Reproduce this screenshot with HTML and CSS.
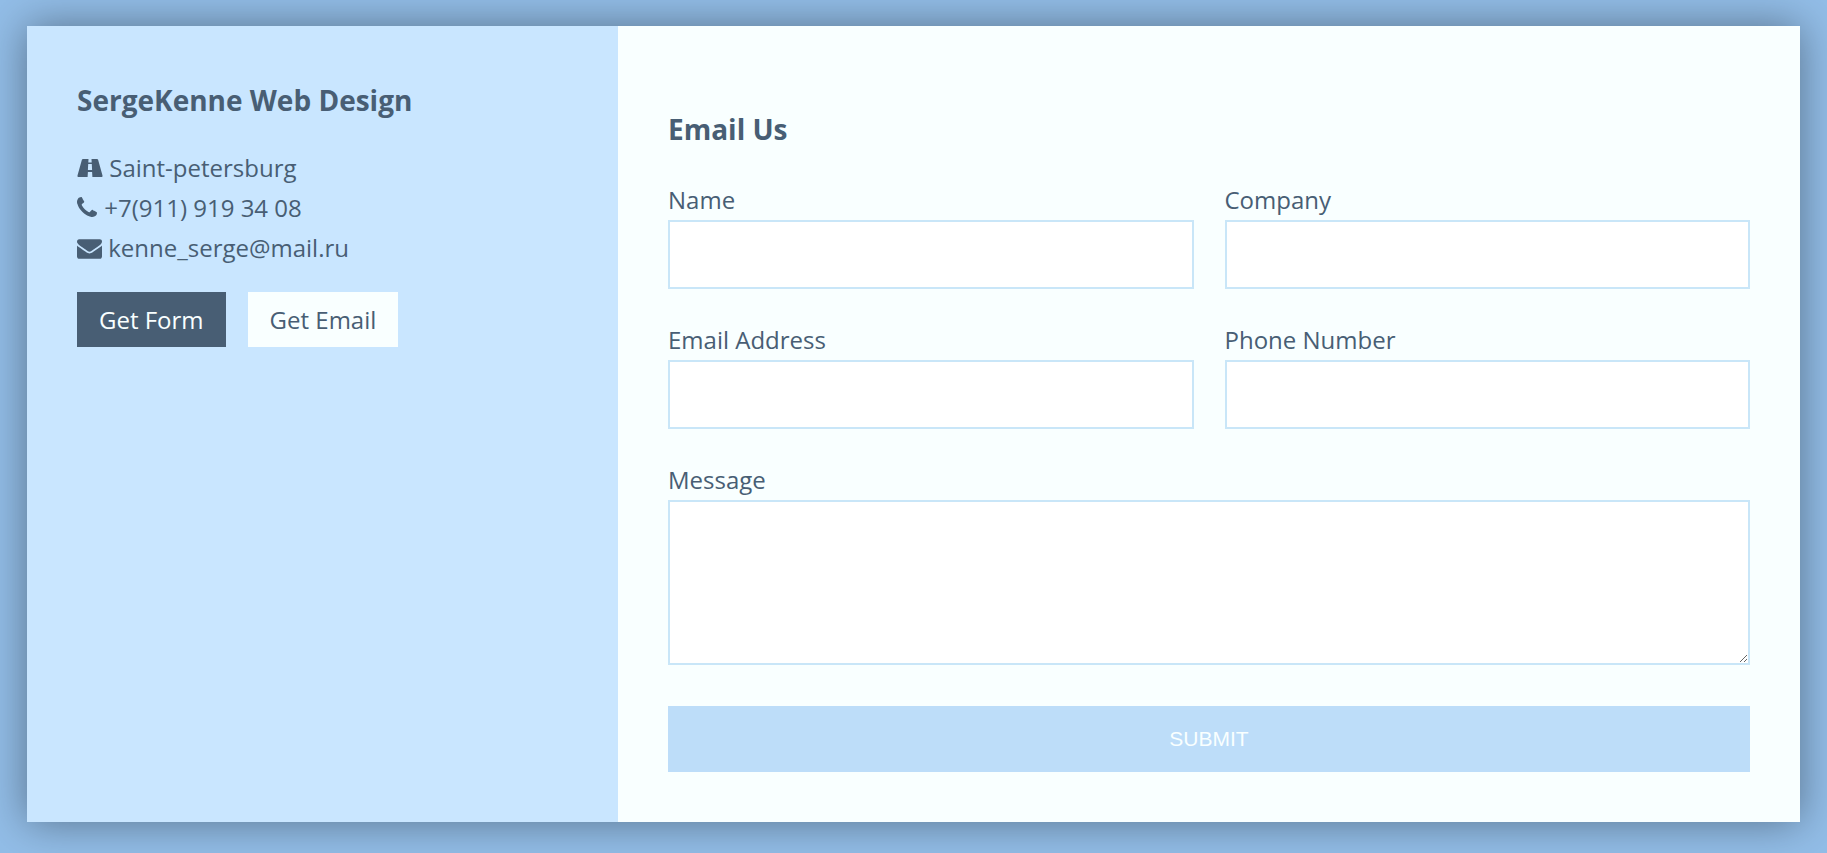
FILE: index.html
```html
<!DOCTYPE html>
<html lang="en">
<head>
<meta charset="utf-8">
<meta name="viewport" content="width=device-width, initial-scale=1">
<title>SergeKenne Web Design</title>
<link rel="stylesheet" href="styles.css">
</head>
<body>
<main class="card">
  <section class="info">
    <h3 class="title">SergeKenne Web Design</h3>
    <ul class="details">
      <li><svg class="icon icon-road" viewBox="0 0 25 18" aria-hidden="true"><path fill-rule="evenodd" d="M5.5 0H11L10.8 3.500H14.200L14 0H19.500Q20.300 0 20.600.8L25 16.500Q25.300 18 24.200 18H14.900L14.600 13H10.400L10.100 18H.8Q-.3 18 0 16.500L4.400.8Q4.700 0 5.500 0ZM10.700 5L10.400 11H14.600L14.300 5Z"/></svg> Saint-petersburg</li>
      <li><svg class="icon icon-phone" viewBox="0 0 1408 1408" aria-hidden="true"><path d="M1408 1112q0 27-10 70.500t-21 68.500q-21 50-122 106-94 51-186 51-27 0-53-3.500t-57.500-12.500-47-14.500-55.500-20.500-49-18q-98-35-175-83-127-79-264-216t-216-264q-48-77-83-175-3-9-18-49t-20.500-55.500-14.500-47-12.500-57.500-3.500-53q0-92 51-186 56-101 106-122 25-11 68.500-21t70.500-10q14 0 21 3 18 6 53 76 11 19 30 54t35 63.500 31 53.500q3 4 17.500 25t21.500 35.500 7 28.500q0 20-28.500 50t-62 55-62 53-28.500 46q0 9 5 22.500t8.500 20.500 14 24 11.500 19q76 137 174 235t235 174q2 1 19 11.500t24 14 20.500 8.500 22.500 5q18 0 46-28.500t53-62 55-62 50-28.500q14 0 28.500 7t35.500 21.500 25 17.500q25 15 53.500 31t63.500 35 54 30q70 35 76 53 3 7 3 21z"/></svg> +7(911) 919 34 08</li>
      <li><svg class="icon icon-mail" viewBox="0 0 1792 1408" aria-hidden="true"><path d="M1792 454v794q0 66-47 113t-113 47H160q-66 0-113-47T0 1248V454q44 49 101 87 362 246 497 345 57 42 92.500 65.500t94.500 48 110 24.500h2q51 0 110-24.500t94.500-48T1194 886q170-123 498-345 57-39 100-87zm0-294q0 79-49 151t-122 123q-376 261-468 325-10 7-42.500 30.500t-54 38-52 32.500-57.500 27-50 9h-2q-23 0-50-9t-57.500-27-52-32.500-54-38T639 759q-91-64-262-182.500T172 434q-62-42-117-115.500T0 182q0-78 41.500-130T160 0h1472q65 0 112.500 47T1792 160z"/></svg> kenne_serge@mail.ru</li>
    </ul>
    <div class="actions">
      <button type="button" class="btn btn-dark">Get Form</button>
      <button type="button" class="btn btn-light">Get Email</button>
    </div>
  </section>
  <section class="contact">
    <h3 class="title">Email Us</h3>
    <form class="form">
      <div class="field"><label for="name">Name</label><input type="text" id="name" name="name"></div>
      <div class="field"><label for="company">Company</label><input type="text" id="company" name="company"></div>
      <div class="field"><label for="email">Email Address</label><input type="email" id="email" name="email"></div>
      <div class="field"><label for="phone">Phone Number</label><input type="tel" id="phone" name="phone"></div>
      <div class="field full"><label for="message">Message</label><textarea id="message" name="message" rows="5"></textarea></div>
      <button type="submit" class="submit full">SUBMIT</button>
    </form>
  </section>
</main>
</body>
</html>
```
FILE: styles.css
```css
* {
  box-sizing: border-box;
}

body {
  margin: 0;
  padding: 26px 27px 31px;
  background: #92bde7;
  color: #485e74;
  font-family: "Segoe UI", "Open Sans", "Noto Sans", sans-serif;
  font-size: 24px;
  line-height: 40px;
}

.card {
  display: grid;
  grid-template-columns: 1fr 2fr;
  box-shadow: 0 0 40px rgba(0, 0, 0, 0.4);
}

.info {
  padding: 50px;
  background: #c9e6ff;
}

.contact {
  padding: 79px 50px 50px;
  background: #f9ffff;
}

.title {
  margin: 0;
  font-size: 28px;
  line-height: 48px;
  font-weight: 700;
}

.details {
  list-style: none;
  margin: 24px 0;
  padding: 0;
}

.icon {
  fill: currentColor;
}

.icon-road {
  width: 26px;
  height: 18px;
}

.icon-phone {
  width: 20px;
  height: 20px;
  margin-right: 1px;
}

.icon-mail {
  width: 25px;
  height: 20px;
  vertical-align: -2px;
}

.actions {
  display: flex;
  flex-wrap: wrap;
  gap: 22px;
}

.btn {
  border: 0;
  padding: 8px 22px 7px;
  font: inherit;
  cursor: pointer;
}

.btn-dark {
  background: #485e74;
  color: #f9ffff;
}

.btn-light {
  background: #f9ffff;
  color: #485e74;
}

.form {
  display: grid;
  grid-template-columns: 1fr 1fr;
  gap: 31px;
  margin-top: 27px;
}

.field {
  display: flex;
  flex-direction: column;
}

.full {
  grid-column: 1 / -1;
}

.field input,
.field textarea {
  width: 100%;
  border: 2px solid #c9e6f8;
  border-radius: 0;
  padding: 16px;
  background: #fff;
  color: inherit;
  font: inherit;
}

.field input {
  height: 69px;
}

.field textarea {
  height: 165px;
  resize: both;
}

.submit {
  margin-top: 10px;
  border: 0;
  padding: 20px;
  background: #bdddf9;
  color: #f9ffff;
  font-family: Arial, "Liberation Sans", sans-serif;
  font-size: 21px;
  line-height: 26px;
  cursor: pointer;
}
```
